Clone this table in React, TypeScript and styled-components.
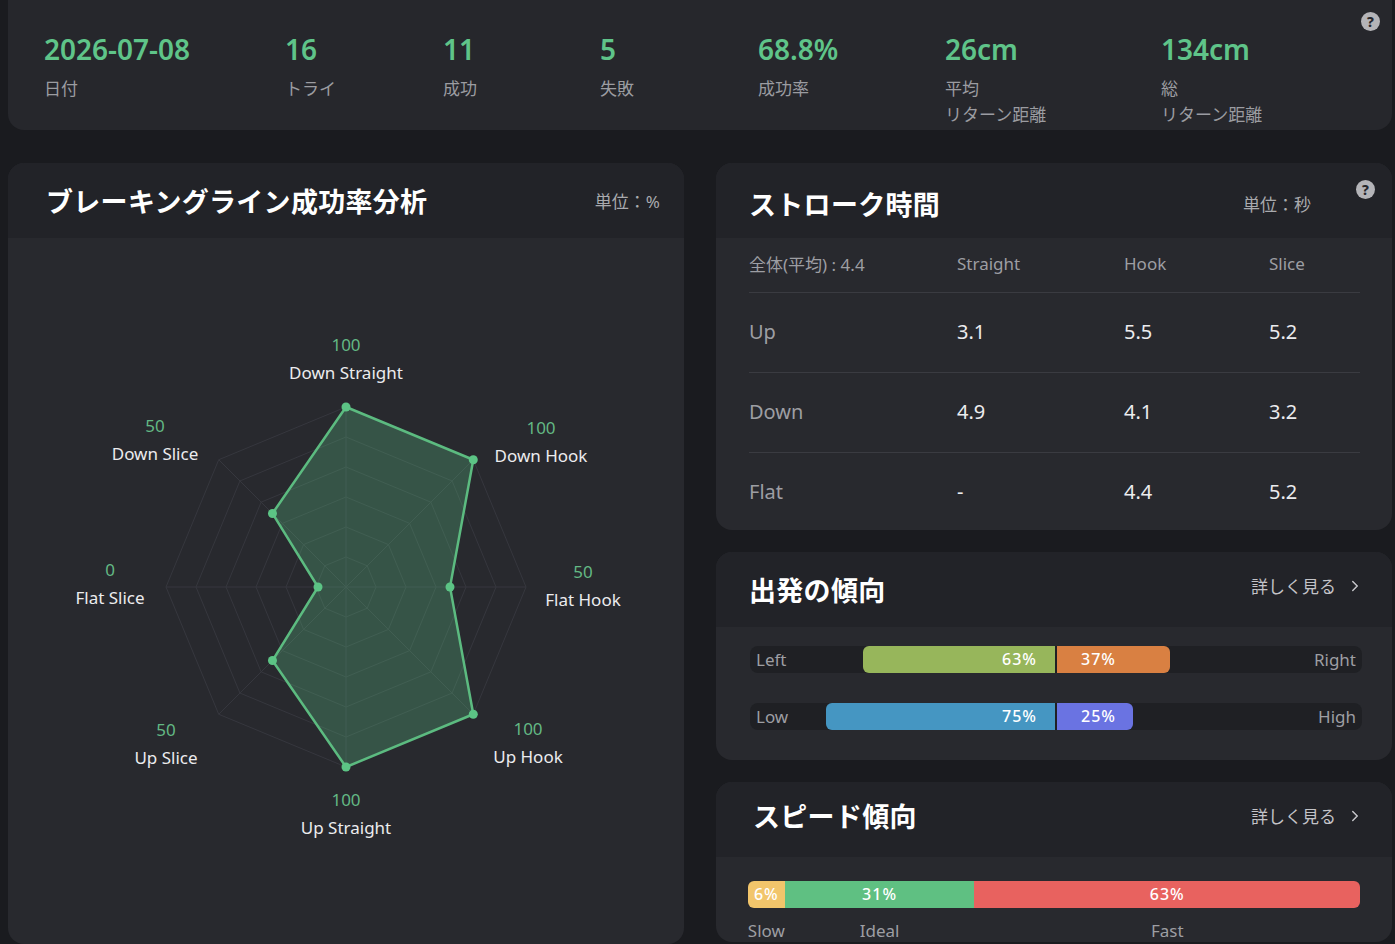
import React from "react";
import styled, { createGlobalStyle } from "styled-components";
import { ChevronRight } from "lucide-react";

const GlobalStyle = createGlobalStyle`
  html, body {
    margin: 0;
    padding: 0;
    background: #1a1b1f;
  }
  body {
    font-family: "Noto Sans", "Noto Sans CJK JP", sans-serif;
    color: #e6e6e8;
  }
  * {
    box-sizing: border-box;
  }
`;

const colors = {
  green: "#5fc489",
  label: "#9b9ca1",
  header: "#222328",
  body: "#28292e",
  track: "#1f2024",
};

const stats = [
  { value: "2026-07-08", label: ["日付"] },
  { value: "16", label: ["トライ"] },
  { value: "11", label: ["成功"] },
  { value: "5", label: ["失敗"] },
  { value: "68.8%", label: ["成功率"] },
  { value: "26cm", label: ["平均", "リターン距離"] },
  { value: "134cm", label: ["総", "リターン距離"] },
];

const strokeRows = [
  { name: "Up", values: ["3.1", "5.5", "5.2"] },
  { name: "Down", values: ["4.9", "4.1", "3.2"] },
  { name: "Flat", values: ["-", "4.4", "5.2"] },
];

const radarPoints = [
  { name: "Down Straight", value: 100, lx: 338, ly: 108 },
  { name: "Down Hook", value: 100, lx: 533, ly: 191 },
  { name: "Flat Hook", value: 50, lx: 575, ly: 335 },
  { name: "Up Hook", value: 100, lx: 520, ly: 492 },
  { name: "Up Straight", value: 100, lx: 338, ly: 563 },
  { name: "Up Slice", value: 50, lx: 158, ly: 493 },
  { name: "Flat Slice", value: 0, lx: 102, ly: 333 },
  { name: "Down Slice", value: 50, lx: 147, ly: 189 },
];

export default function App() {
  return (
    <>
      <GlobalStyle />
      <Page>
        <StatsCard>
          <HelpBadge $top={12} $right={12}>?</HelpBadge>
          <StatsGrid>
            {stats.map((s) => (
              <Stat key={s.value}>
                <StatValue>{s.value}</StatValue>
                <StatLabel>
                  {s.label.map((l) => (
                    <div key={l}>{l}</div>
                  ))}
                </StatLabel>
              </Stat>
            ))}
          </StatsGrid>
        </StatsCard>

        <Columns>
          <Card>
            <CardHeader $pad={38}>
              <Title>ブレーキングライン成功率分析</Title>
              <Unit>単位：%</Unit>
            </CardHeader>
            <RadarBody>
              <RadarChart />
            </RadarBody>
          </Card>

          <RightColumn>
            <Card>
              <HelpBadge $top={17} $right={17}>?</HelpBadge>
              <CardHeader $pad={33} $shift={3}>
                <Title>ストローク時間</Title>
                <Unit $mr={49}>単位：秒</Unit>
              </CardHeader>
              <TableBody>
                <TableHead>
                  <span>全体(平均) : 4.4</span>
                  <span>Straight</span>
                  <span>Hook</span>
                  <span>Slice</span>
                </TableHead>
                {strokeRows.map((r) => (
                  <TableRow key={r.name}>
                    <RowName>{r.name}</RowName>
                    {r.values.map((v, i) => (
                      <RowValue key={i}>{v}</RowValue>
                    ))}
                  </TableRow>
                ))}
              </TableBody>
            </Card>

            <Card>
              <CardHeader $pad={33}>
                <Title>出発の傾向</Title>
                <MoreLink $lift={4}>
                  詳しく見る
                  <ChevronRight size={18} strokeWidth={2} />
                </MoreLink>
              </CardHeader>
              <BalanceBody>
                <BalanceBar
                  left="Left"
                  right="Right"
                  lp={63}
                  rp={37}
                  lc="#97b65b"
                  rc="#d98042"
                />
                <BalanceBar
                  left="Low"
                  right="High"
                  lp={75}
                  rp={25}
                  lc="#4596c2"
                  rc="#6a73e2"
                />
              </BalanceBody>
            </Card>

            <Card>
              <CardHeader $pad={37} $shift={-4}>
                <Title>スピード傾向</Title>
                <MoreLink>
                  詳しく見る
                  <ChevronRight size={18} strokeWidth={2} />
                </MoreLink>
              </CardHeader>
              <SpeedBody>
                <SpeedBar>
                  <SpeedSegment $color="#f2c56b" style={{ width: "6%" }}>
                    6%
                  </SpeedSegment>
                  <SpeedSegment $color="#5fc082" style={{ width: "31%" }}>
                    31%
                  </SpeedSegment>
                  <SpeedSegment $color="#e8625f" style={{ width: "63%" }}>
                    63%
                  </SpeedSegment>
                </SpeedBar>
                <SpeedLabels>
                  <SpeedLabel style={{ width: "6%" }}>Slow</SpeedLabel>
                  <SpeedLabel style={{ width: "31%" }}>Ideal</SpeedLabel>
                  <SpeedLabel style={{ width: "63%" }}>Fast</SpeedLabel>
                </SpeedLabels>
              </SpeedBody>
            </Card>
          </RightColumn>
        </Columns>
      </Page>
    </>
  );
}

function BalanceBar(props: {
  left: string;
  right: string;
  lp: number;
  rp: number;
  lc: string;
  rc: string;
}) {
  return (
    <Track>
      <TrackLabel>{props.left}</TrackLabel>
      <Half $side="left">
        <Fill $color={props.lc} $side="left" style={{ width: `${props.lp}%` }}>
          {props.lp}%
        </Fill>
      </Half>
      <Half $side="right">
        <Fill $color={props.rc} $side="right" style={{ width: `${props.rp}%` }}>
          {props.rp}%
        </Fill>
      </Half>
      <TrackLabel $right>{props.right}</TrackLabel>
    </Track>
  );
}

function RadarChart() {
  const cx = 338;
  const cy = 349;
  const n = 8;
  const angle = (i: number) => -Math.PI / 2 + (i * 2 * Math.PI) / n;
  const pt = (i: number, r: number) =>
    `${cx + r * Math.cos(angle(i))},${cy + r * Math.sin(angle(i))}`;
  const rings = [30, 60, 90, 120, 150, 180];
  const rad = (v: number) => 28 + v * 1.52;
  const dataPts = radarPoints.map((p, i) => pt(i, rad(p.value)));

  return (
    <svg width="676" height="706" viewBox="0 0 676 706">
      {rings.map((r) => (
        <polygon
          key={r}
          points={Array.from({ length: n }, (_, i) => pt(i, r)).join(" ")}
          fill="none"
          stroke="#36373e"
          strokeWidth="1"
        />
      ))}
      {Array.from({ length: n }, (_, i) => {
        const [x, y] = pt(i, 180).split(",");
        return (
          <line key={i} x1={cx} y1={cy} x2={x} y2={y} stroke="#36373e" strokeWidth="1" />
        );
      })}
      <polygon
        points={dataPts.join(" ")}
        fill="rgba(95, 196, 137, 0.28)"
        stroke="#5cbb80"
        strokeWidth="2.5"
        strokeLinejoin="round"
      />
      {dataPts.map((p, i) => {
        const [x, y] = p.split(",");
        return <circle key={i} cx={x} cy={y} r="4.5" fill="#5cc485" />;
      })}
      {radarPoints.map((p) => (
        <g key={p.name}>
          <text
            x={p.lx}
            y={p.ly}
            textAnchor="middle"
            dominantBaseline="middle"
            fill="#63b884"
            fontSize="17"
            fontFamily="Noto Sans, sans-serif"
          >
            {p.value}
          </text>
          <text
            x={p.lx}
            y={p.ly + 28}
            textAnchor="middle"
            dominantBaseline="middle"
            fill="#ececee"
            fontSize="17"
            fontFamily="Noto Sans, sans-serif"
          >
            {p.name}
          </text>
        </g>
      ))}
    </svg>
  );
}

const Page = styled.div`
  padding: 0 3px 0 8px;
  width: 1395px;
  height: 944px;
  overflow: hidden;
`;

const StatsCard = styled.section`
  position: relative;
  height: 130px;
  background: #26272c;
  border-radius: 0 0 16px 16px;
  padding: 29px 0 0 36px;
`;

const StatsGrid = styled.div`
  display: grid;
  grid-template-columns: 241px 158px 157px 158px 187px 216px 1fr;
`;

const Stat = styled.div`
  display: flex;
  flex-direction: column;
`;

const StatValue = styled.div`
  color: ${colors.green};
  font-size: 28px;
  font-weight: 600;
  line-height: 40px;
`;

const StatLabel = styled.div`
  color: ${colors.label};
  font-size: 17px;
  line-height: 26px;
  margin-top: 7px;
`;

const HelpBadge = styled.span<{ $top: number; $right: number }>`
  position: absolute;
  top: ${(p) => p.$top}px;
  right: ${(p) => p.$right}px;
  width: 19px;
  height: 19px;
  border-radius: 50%;
  background: #b4b4b8;
  color: #26272c;
  font-size: 14px;
  font-weight: 800;
  line-height: 19px;
  text-align: center;
`;

const Columns = styled.div`
  display: flex;
  gap: 32px;
  margin-top: 33px;
`;

const RightColumn = styled.div`
  display: flex;
  flex-direction: column;
  gap: 22px;
  width: 676px;
`;

const Card = styled.section`
  position: relative;
  width: 676px;
  border-radius: 16px;
  overflow: hidden;
  background: ${colors.body};
`;

const CardHeader = styled.header<{ $pad: number; $shift?: number }>`
  display: flex;
  align-items: center;
  justify-content: space-between;
  height: 75px;
  background: ${colors.header};
  padding-left: ${(p) => p.$pad}px;
  padding-right: 32px;
  padding-top: ${(p) => Math.max(0, (p.$shift ?? 0) * 2)}px;
  padding-bottom: ${(p) => Math.max(0, -(p.$shift ?? 0) * 2)}px;
`;

const Title = styled.h2`
  margin: 0;
  font-size: 27px;
  font-weight: 700;
  color: #ffffff;
  letter-spacing: 0.3px;
`;

const Unit = styled.span<{ $mr?: number }>`
  font-size: 17px;
  color: #a9aaae;
  margin-right: ${(p) => p.$mr ?? -8}px;
`;

const MoreLink = styled.span<{ $lift?: number }>`
  display: flex;
  align-items: center;
  gap: 10px;
  font-size: 17px;
  color: #c4c4c8;
  margin-right: -4px;
  margin-bottom: ${(p) => (p.$lift ?? 0) * 2}px;
`;

const RadarBody = styled.div`
  height: 706px;
`;

const TableBody = styled.div`
  padding: 0 32px 0 33px;
`;

const TableHead = styled.div`
  display: grid;
  grid-template-columns: 208px 167px 145px 1fr;
  align-items: center;
  height: 55px;
  padding-bottom: 3px;
  border-bottom: 1px solid #3a3b41;
  font-size: 17px;
  color: #9d9ea3;
`;

const TableRow = styled.div`
  display: grid;
  grid-template-columns: 208px 167px 145px 1fr;
  align-items: center;
  height: 80px;
  padding-bottom: 3px;
  border-bottom: 1px solid #3a3b41;
  &:last-child {
    border-bottom: none;
    height: 77px;
    padding-bottom: 0;
  }
`;

const RowName = styled.span`
  font-size: 20px;
  color: #9d9ea3;
`;

const RowValue = styled.span`
  font-size: 20px;
  color: #ececee;
`;

const BalanceBody = styled.div`
  display: flex;
  flex-direction: column;
  gap: 30px;
  padding: 19px 30px 30px 34px;
`;

const Track = styled.div`
  position: relative;
  display: flex;
  height: 27px;
  border-radius: 8px;
  background: ${colors.track};
`;

const TrackLabel = styled.span<{ $right?: boolean }>`
  position: absolute;
  top: 0;
  ${(p) => (p.$right ? "right: 6px;" : "left: 6px;")}
  line-height: 27px;
  font-size: 17px;
  color: #9d9ea3;
`;

const Half = styled.div<{ $side: "left" | "right" }>`
  flex: 1;
  display: flex;
  justify-content: ${(p) => (p.$side === "left" ? "flex-end" : "flex-start")};
  ${(p) => (p.$side === "left" ? "padding-right: 1px;" : "padding-left: 1px;")}
`;

const Fill = styled.div<{ $color: string; $side: "left" | "right" }>`
  height: 27px;
  background: ${(p) => p.$color};
  border-radius: ${(p) => (p.$side === "left" ? "6px 0 0 6px" : "0 6px 6px 0")};
  color: #ffffff;
  font-size: 16px;
  font-weight: 500;
  letter-spacing: 1px;
  line-height: 27px;
  text-align: ${(p) => (p.$side === "left" ? "right" : "left")};
  ${(p) => (p.$side === "left" ? "padding-right: 18px;" : "padding-left: 24px;")}
`;

const SpeedBody = styled.div`
  padding: 24px 32px 0 32px;
`;

const SpeedBar = styled.div`
  display: flex;
  height: 27px;
  border-radius: 6px;
  overflow: hidden;
`;

const SpeedSegment = styled.div<{ $color: string }>`
  background: ${(p) => p.$color};
  color: #ffffff;
  font-size: 16px;
  font-weight: 500;
  letter-spacing: 1px;
  line-height: 27px;
  text-align: center;
`;

const SpeedLabels = styled.div`
  display: flex;
  margin-top: 11px;
`;

const SpeedLabel = styled.span`
  display: flex;
  justify-content: center;
  white-space: nowrap;
  font-size: 17px;
  color: #9d9ea3;
`;
